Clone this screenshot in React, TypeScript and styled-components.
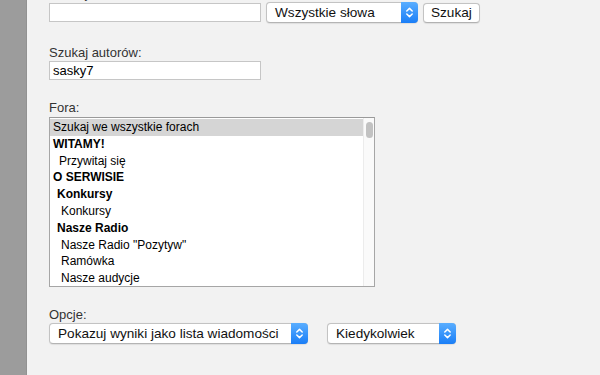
import styled, { createGlobalStyle } from "styled-components";

const GlobalStyle = createGlobalStyle`
    html, body {
        margin: 0;
        padding: 0;
        height: 100%;
        overflow: hidden;
    }
    body {
        font-family: "Liberation Sans", Arial, sans-serif;
        font-size: 13px;
        background-color: #f2f2f2;
    }
`;

const Page = styled.div`
    display: flex;
    height: 375px;
    overflow: hidden;
`;

const Sidebar = styled.div`
    width: 26px;
    flex-shrink: 0;
    background-color: #9c9c9c;
    border-right: 1px solid #929292;
`;

const Form = styled.div`
    display: flex;
    flex-direction: column;
    padding-left: 22px;
    margin-top: -14px;
`;

const Field = styled.div<{ $top?: number }>`
    display: flex;
    flex-direction: column;
    margin-top: ${(p) => p.$top ?? 0}px;
`;

const Label = styled.div`
    height: 16px;
    line-height: 16px;
    color: #333333;
`;

const Row = styled.div`
    display: flex;
    align-items: center;
    height: 21px;
`;

const TextInput = styled.div`
    box-sizing: border-box;
    width: 212px;
    height: 19px;
    line-height: 17px;
    padding: 0 3px;
    background: #ffffff;
    border: 1px solid #c6c6c6;
    color: #000000;
`;

const SelectBox = styled.div<{ $width: number; $left?: number }>`
    box-sizing: border-box;
    display: flex;
    align-items: stretch;
    width: ${(p) => p.$width}px;
    height: 21px;
    margin-left: ${(p) => p.$left ?? 0}px;
    background: #ffffff;
    border: 1px solid #c3c3c3;
    border-bottom-color: #b4b4b4;
    border-radius: 4px;
    box-shadow: 0 0.5px 1px rgba(0, 0, 0, 0.08);
    .value {
        flex: 1;
        font-size: 13.6px;
        line-height: 19px;
        padding-left: 8px;
        color: #111111;
        white-space: nowrap;
        overflow: hidden;
    }
    .arrows {
        width: 17px;
        margin: -1px -1px -1px 0;
        display: flex;
        align-items: center;
        justify-content: center;
        border-radius: 0 4px 4px 0;
        background: linear-gradient(#5aaeff, #1a7ef7);
    }
`;

const Button = styled.div`
    box-sizing: border-box;
    height: 20px;
    margin-left: 5px;
    padding: 0 7px;
    font-size: 13.6px;
    line-height: 18px;
    background: #ffffff;
    border: 1px solid #c3c3c3;
    border-bottom-color: #b2b2b2;
    border-radius: 4px;
    color: #111111;
    box-shadow: 0 0.5px 1px rgba(0, 0, 0, 0.08);
`;

const ListBox = styled.div`
    box-sizing: border-box;
    display: flex;
    width: 326px;
    height: 170px;
    margin-top: 1px;
    background: #ffffff;
    border: 1px solid #a6a6a6;
    border-top-color: #9a9a9a;
    overflow: hidden;
`;

const Options = styled.div`
    flex: 1;
    padding-top: 1px;
`;

const Option = styled.div<{ $indent: number; $bold?: boolean; $selected?: boolean }>`
    height: 16.8px;
    line-height: 17px;
    padding-left: ${(p) => 3 + p.$indent}px;
    font-size: 12px;
    font-weight: ${(p) => (p.$bold ? 700 : 400)};
    color: #000000;
    white-space: nowrap;
    background: ${(p) => (p.$selected ? "#d5d5d5" : "transparent")};
`;

const Scrollbar = styled.div`
    width: 11px;
    background: #fafafa;
    border-left: 1px solid #ececec;
    padding: 4px 0 0 2px;
    box-sizing: border-box;
    .thumb {
        width: 7px;
        height: 16px;
        border-radius: 4px;
        background: #c2c2c2;
    }
`;

const Chevrons = () => (
    <svg width="9" height="13" viewBox="0 0 9 13">
        <path d="M1.8 5 L4.5 2.4 L7.2 5" fill="none" stroke="#ffffff" strokeWidth="1.5" strokeLinecap="round" strokeLinejoin="round" />
        <path d="M1.8 8 L4.5 10.6 L7.2 8" fill="none" stroke="#ffffff" strokeWidth="1.5" strokeLinecap="round" strokeLinejoin="round" />
    </svg>
);

const Select = ({ value, width, left }: { value: string; width: number; left?: number }) => (
    <SelectBox $width={width} $left={left}>
        <div className="value">{value}</div>
        <div className="arrows">
            <Chevrons />
        </div>
    </SelectBox>
);

const forums = [
    { text: "Szukaj we wszystkie forach", indent: 0, selected: true },
    { text: "WITAMY!", indent: 0, bold: true },
    { text: "Przywitaj się", indent: 6 },
    { text: "O SERWISIE", indent: 0, bold: true },
    { text: "Konkursy", indent: 4, bold: true },
    { text: "Konkursy", indent: 8 },
    { text: "Nasze Radio", indent: 4, bold: true },
    { text: "Nasze Radio \"Pozytyw\"", indent: 8 },
    { text: "Ramówka", indent: 8 },
    { text: "Nasze audycje", indent: 8 },
];

const App = (): JSX.Element => {
    return (
        <Page>
            <GlobalStyle />
            <Sidebar />
            <Form>
                <Field>
                    <Label>Szukaj słów:</Label>
                    <Row>
                        <TextInput />
                        <Select value="Wszystkie słowa" width={152} left={5} />
                        <Button>Szukaj</Button>
                    </Row>
                </Field>
                <Field $top={22}>
                    <Label>Szukaj autorów:</Label>
                    <TextInput>sasky7</TextInput>
                </Field>
                <Field $top={20}>
                    <Label>Fora:</Label>
                    <ListBox>
                        <Options>
                            {forums.map((f, i) => (
                                <Option key={i} $indent={f.indent} $bold={f.bold} $selected={f.selected}>
                                    {f.text}
                                </Option>
                            ))}
                        </Options>
                        <Scrollbar>
                            <div className="thumb" />
                        </Scrollbar>
                    </ListBox>
                </Field>
                <Field $top={20}>
                    <Label>Opcje:</Label>
                    <Row>
                        <Select value="Pokazuj wyniki jako lista wiadomości" width={259} />
                        <Select value="Kiedykolwiek" width={129} left={19} />
                    </Row>
                </Field>
            </Form>
        </Page>
    );
};

export default App;
